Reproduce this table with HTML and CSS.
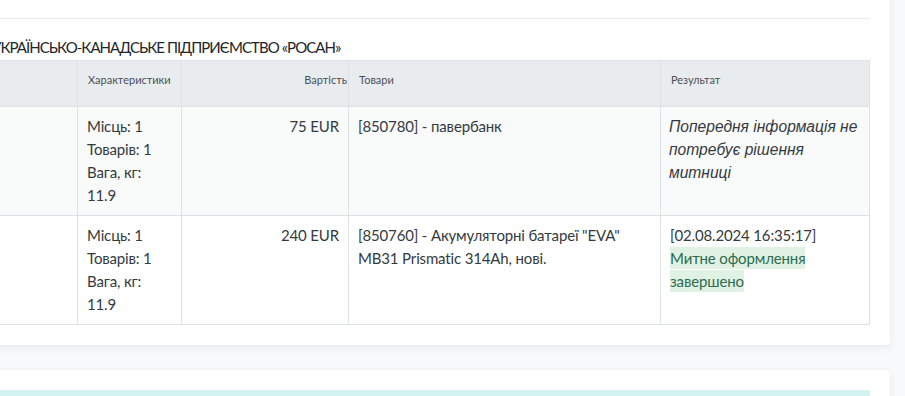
FILE: index.html
```html
<!DOCTYPE html>
<html lang="uk">
<head>
<meta charset="utf-8">
<title>Декларація</title>
<link rel="stylesheet" href="styles.css">
</head>
<body>
<div class="page">
  <section class="card card-main">
    <div class="card-top"></div>
    <hr class="divider">
    <h3 class="party">УКРАЇНСЬКО-КАНАДСЬКЕ ПІДПРИЄМСТВО «РОСАН»</h3>
    <table class="goods">
      <thead>
        <tr>
          <th class="c-first"></th>
          <th class="c-char">Характеристики</th>
          <th class="c-cost">Вартість</th>
          <th class="c-goods">Товари</th>
          <th class="c-result">Результат</th>
        </tr>
      </thead>
      <tbody>
        <tr class="striped">
          <td></td>
          <td>Місць: 1<br>Товарів: 1<br>Вага, кг:<br>11.9</td>
          <td class="num">75 EUR</td>
          <td>[850780] - павербанк</td>
          <td class="note">Попередня інформація не потребує рішення митниці</td>
        </tr>
        <tr>
          <td></td>
          <td>Місць: 1<br>Товарів: 1<br>Вага, кг:<br>11.9</td>
          <td class="num">240 EUR</td>
          <td>[850760] - Акумуляторні батареї "EVA" MB31 Prismatic 314Ah, нові.</td>
          <td>[02.08.2024 16:35:17]<br><span class="ok">Митне оформлення завершено</span></td>
        </tr>
      </tbody>
    </table>
  </section>
  <section class="card card-next">
    <div class="info-bar"></div>
  </section>
</div>
</body>
</html>
```

FILE: styles.css
```css
html, body {
  margin: 0;
  padding: 0;
}
body {
  background: #f8f9fa;
  font-family: Lato, "Noto Sans", sans-serif;
  color: #343a40;
  overflow: hidden;
}
.page {
  width: 1190px;
  margin-left: -300px;
  margin-top: -60px;
  display: flex;
  flex-direction: column;
  gap: 25px;
}
.card {
  background: #fff;
  border-radius: 4px;
  box-shadow: 0 0 1px rgba(0, 0, 0, 0.12), 0 3px 10px rgba(0, 0, 0, 0.06);
  padding: 20px;
}
.card-top {
  height: 58px;
}
.divider {
  margin: 0;
  border: 0;
  border-top: 1px solid #e9ecef;
}
.party {
  margin: 16px 0 1px 272px;
  font-size: 15px;
  letter-spacing: -0.95px;
  line-height: 24px;
  font-weight: normal;
  color: #212529;
  text-transform: uppercase;
  white-space: nowrap;
}
.goods {
  width: 1150px;
  border-collapse: collapse;
  table-layout: fixed;
  font-size: 15px;
  line-height: 23px;
  letter-spacing: -0.15px;
}
.goods th,
.goods td {
  border: 1px solid #dee2e6;
  vertical-align: top;
  text-align: left;
}
.goods th {
  background: #e9ecef;
  color: #495057;
  font-size: 11px;
  line-height: 16px;
  letter-spacing: 0;
  font-weight: normal;
  height: 46px;
  box-sizing: border-box;
  padding: 11px 10px 0;
}
.goods td {
  padding: 8px 9px;
}
.c-first { width: 357px; }
.c-char { width: 104px; }
.c-cost { width: 167px; }
.c-goods { width: 312px; }
.c-result { width: 209px; }
.goods th.c-cost {
  text-align: right;
  padding-right: 1px;
}
.goods td.num {
  text-align: right;
  padding-right: 9px;
}
.striped td {
  background: #f9fafa;
}
.goods td.note {
  font-family: "Liberation Sans", Arial, sans-serif;
  font-style: italic;
  font-size: 15.6px;
  padding-left: 8px;
  padding-right: 6px;
  letter-spacing: 0;
}
.ok {
  background: #dff2e3;
  color: #2f6b4f;
  padding: 2px 0;
}
.card-next {
  height: 80px;
}
.info-bar {
  height: 60px;
  background: #d3f3f1;
}
```
